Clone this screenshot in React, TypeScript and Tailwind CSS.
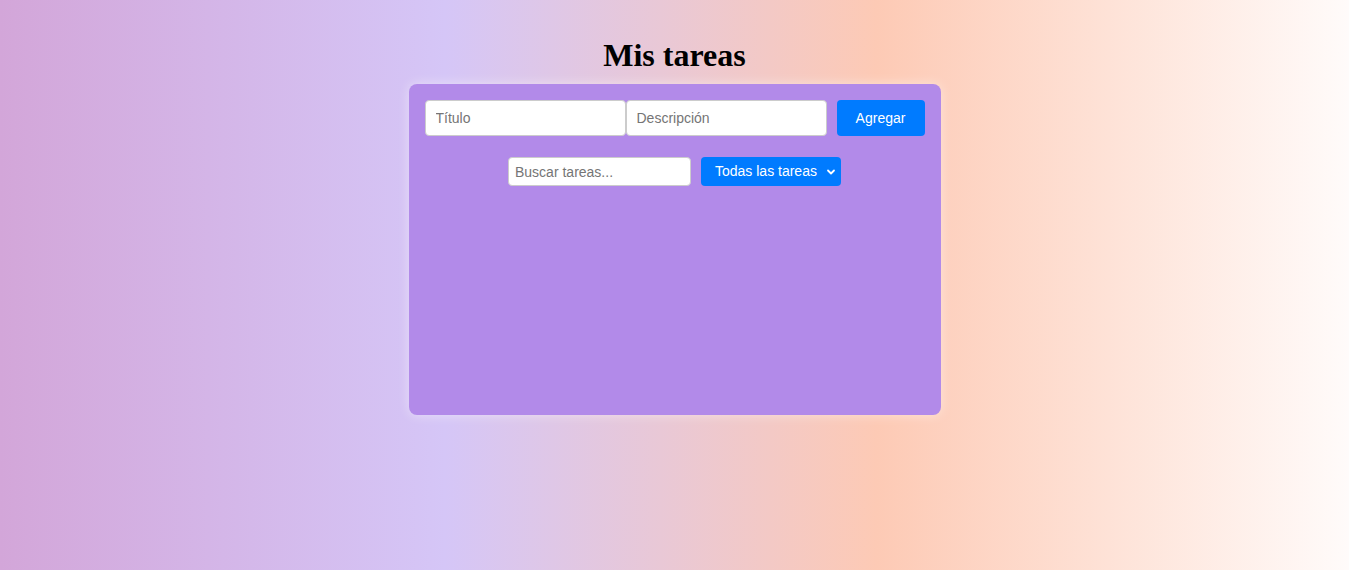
import React from "react";

export default function App() {
  return (
    <div
      className="min-h-[570px] w-full flex flex-col items-center pt-[31px] bg-[linear-gradient(to_right,#d3a6d9_0%,#d5c6f7_33%,#fdcab5_65%,#fffbfa_100%)]"
      style={{ fontFamily: "'Liberation Sans', Arial, sans-serif" }}
    >
      <h1
        className="text-[32px] font-bold leading-normal text-black mb-[5px]"
        style={{ fontFamily: "'Liberation Serif', 'Times New Roman', serif" }}
      >
        Mis tareas
      </h1>
      <div className="w-[532px] h-[331px] rounded-lg bg-[#b28ae9] p-4 shadow-[0_0_12px_rgba(255,255,255,0.45)]">
        <div className="flex h-[36px]">
          <input
            placeholder="Título"
            className="flex-1 min-w-0 h-full px-[10px] text-[14px] bg-white border border-[#ccc] rounded-[4px] placeholder:text-[#757575] outline-none"
          />
          <input
            placeholder="Descripción"
            className="flex-1 min-w-0 h-full px-[10px] text-[14px] bg-white border border-[#ccc] rounded-[4px] placeholder:text-[#757575] outline-none"
          />
          <button className="ml-[10px] w-[88px] h-full rounded-[4px] bg-[#007bff] text-white text-[14px]">
            Agregar
          </button>
        </div>
        <div className="flex justify-center gap-[10px] mt-[21px] h-[29px]">
          <input
            placeholder="Buscar tareas..."
            className="w-[183px] h-full px-[6px] text-[14px] bg-white border border-[#ccc] rounded-[4px] placeholder:text-[#757575] outline-none"
          />
          <div className="relative w-[140px] h-full rounded-[4px] bg-[#007bff] text-white text-[14px] flex items-center pl-[14px]">
            <span>Todas las tareas</span>
            <svg
              className="absolute right-[5px] top-1/2 -translate-y-1/2"
              width="10"
              height="10"
              viewBox="0 0 10 10"
              fill="none"
            >
              <path d="M2 3.5 L5 6.5 L8 3.5" stroke="white" strokeWidth="1.8" strokeLinecap="round" strokeLinejoin="round" />
            </svg>
          </div>
        </div>
      </div>
    </div>
  );
}
